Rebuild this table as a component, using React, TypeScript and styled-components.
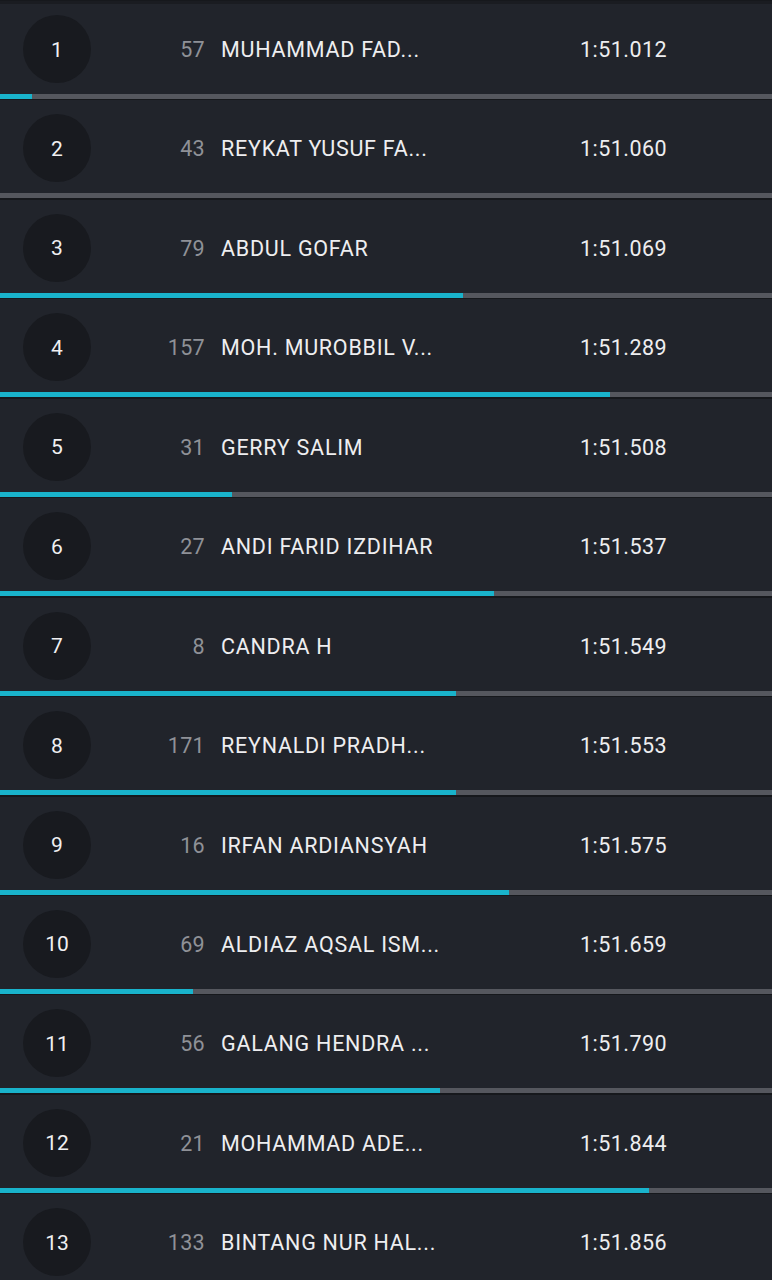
import React from 'react';
import styled, { createGlobalStyle } from 'styled-components';

const GlobalStyle = createGlobalStyle`
  html, body {
    margin: 0;
    padding: 0;
    background: #1b1d22;
  }
  body {
    font-family: Roboto, 'Noto Sans', 'Liberation Sans', sans-serif;
    -webkit-font-smoothing: antialiased;
  }
`;

const List = styled.div`
  display: flex;
  flex-direction: column;
  gap: 1.45px;
  padding-top: 1px;
  width: 772px;
  height: 1280px;
  overflow: hidden;
  background: #16181c;
`;

const Row = styled.div`
  display: flex;
  flex-direction: column;
  background: #21242b;
  flex-shrink: 0;

  &:first-child {
    box-shadow: inset 0 3px 0 #1a1c21;
  }
`;

const RowContent = styled.div`
  display: flex;
  align-items: flex-start;
  height: 93px;
  padding-top: 14px;
  box-sizing: border-box;
`;

const RankCircle = styled.div`
  width: 68px;
  height: 68px;
  margin-left: 23px;
  border-radius: 50%;
  background: #181a1f;
  color: #f0f0f2;
  font-size: 21px;
  padding-top: 1px;
  box-sizing: border-box;
  display: flex;
  align-items: center;
  justify-content: center;
  flex-shrink: 0;
`;

const Bib = styled.div`
  width: 114px;
  text-align: right;
  color: #8f9197;
  font-size: 21.5px;
  letter-spacing: 0.3px;
  line-height: 70px;
  flex-shrink: 0;
`;

const Name = styled.div`
  margin-left: 16px;
  width: 250px;
  color: #eeeef0;
  font-size: 21.5px;
  letter-spacing: 0.75px;
  line-height: 70px;
  white-space: nowrap;
  overflow: hidden;
  flex-shrink: 0;
`;

const Time = styled.div`
  margin-left: 109px;
  color: #eeeef0;
  font-size: 21.5px;
  letter-spacing: 0.45px;
  line-height: 70px;
  white-space: nowrap;
`;

const Track = styled.div`
  height: 5px;
  background: #55575e;
`;

const Fill = styled.div`
  height: 100%;
  background: #19b3cb;
`;

interface Entry {
  rank: number;
  bib: number;
  name: string;
  time: string;
  fill: number;
}

const entries: Entry[] = [
  { rank: 1, bib: 57, name: 'MUHAMMAD FAD...', time: '1:51.012', fill: 32 },
  { rank: 2, bib: 43, name: 'REYKAT YUSUF FA...', time: '1:51.060', fill: 0 },
  { rank: 3, bib: 79, name: 'ABDUL GOFAR', time: '1:51.069', fill: 463 },
  { rank: 4, bib: 157, name: 'MOH. MUROBBIL V...', time: '1:51.289', fill: 610 },
  { rank: 5, bib: 31, name: 'GERRY SALIM', time: '1:51.508', fill: 232 },
  { rank: 6, bib: 27, name: 'ANDI FARID IZDIHAR', time: '1:51.537', fill: 494 },
  { rank: 7, bib: 8, name: 'CANDRA H', time: '1:51.549', fill: 456 },
  { rank: 8, bib: 171, name: 'REYNALDI PRADH...', time: '1:51.553', fill: 456 },
  { rank: 9, bib: 16, name: 'IRFAN ARDIANSYAH', time: '1:51.575', fill: 509 },
  { rank: 10, bib: 69, name: 'ALDIAZ AQSAL ISM...', time: '1:51.659', fill: 193 },
  { rank: 11, bib: 56, name: 'GALANG HENDRA ...', time: '1:51.790', fill: 440 },
  { rank: 12, bib: 21, name: 'MOHAMMAD ADE...', time: '1:51.844', fill: 649 },
  { rank: 13, bib: 133, name: 'BINTANG NUR HAL...', time: '1:51.856', fill: 300 },
];

const App: React.FC = () => {
  return (
    <>
      <GlobalStyle />
      <List>
        {entries.map(e => (
          <Row key={e.rank}>
            <RowContent>
              <RankCircle>{e.rank}</RankCircle>
              <Bib>{e.bib}</Bib>
              <Name>{e.name}</Name>
              <Time>{e.time}</Time>
            </RowContent>
            <Track>
              <Fill style={{ width: `${(e.fill / 772) * 100}%` }} />
            </Track>
          </Row>
        ))}
      </List>
    </>
  );
};

export default App;
